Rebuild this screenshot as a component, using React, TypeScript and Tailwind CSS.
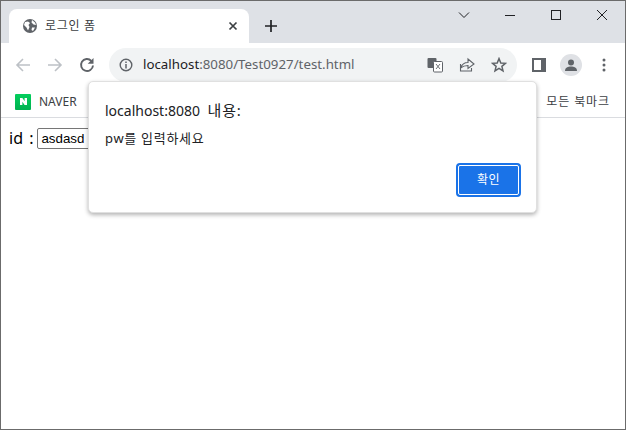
import React from "react";

function Tab() {
  return (
    <div className="relative ml-[8px] mt-[8px] flex h-[34px] w-[240px] items-center rounded-t-[8px] bg-white pl-[13px]">
      <svg width="16" height="16" viewBox="0 0 16 16" className="shrink-0">
        <circle cx="8" cy="8" r="7" fill="#5f6368" />
        <path d="M3 4 L6 3.5 L8 5 L6.5 7 L7.5 9 L6 12.5 L4.5 9.5 L2 7 Z M10 2 L13 4.5 L14 7 L11.5 6.5 L9.5 4.5 Z M10 9.5 L13 9.5 L11 13 L9.5 12 Z" fill="#fff" />
      </svg>
      <span className="ml-[7px] text-[12px] tracking-[0.7px] text-[#3c4043]">로그인 폼</span>
      <svg width="10" height="10" viewBox="0 0 10 10" className="absolute left-[219px] top-[12px]">
        <path d="M1.5 1.5 L8.5 8.5 M8.5 1.5 L1.5 8.5" stroke="#3c4043" strokeWidth="1.7" />
      </svg>
    </div>
  );
}

export default function App() {
  return (
    <div className="relative h-[430px] w-[626px] overflow-hidden border border-[#6b6b6b] bg-white font-['Noto_Sans','Noto_Sans_CJK_KR',sans-serif]">
      {/* title bar */}
      <div className="flex h-[42px] bg-[#dee1e6]">
        <Tab />
        <svg width="14" height="14" viewBox="0 0 14 14" className="ml-[15px] mt-[18px]">
          <path d="M7 1 V13 M1 7 H13" stroke="#202124" strokeWidth="1.7" />
        </svg>
        <div className="ml-auto flex">
          <svg width="12" height="8" viewBox="0 0 12 8" className="mr-[34px] mt-[10px]">
            <path d="M1 1.5 L6 6.5 L11 1.5" stroke="#202124" strokeWidth="1" fill="none" />
          </svg>
          <svg width="12" height="12" viewBox="0 0 12 12" className="mr-[34px] mt-[8px]">
            <path d="M1 6.5 H11" stroke="#202124" strokeWidth="1" />
          </svg>
          <svg width="12" height="12" viewBox="0 0 12 12" className="mr-[34px] mt-[8px]">
            <rect x="1.5" y="1.5" width="9" height="9" stroke="#202124" fill="none" />
          </svg>
          <svg width="12" height="12" viewBox="0 0 12 12" className="mr-[17px] mt-[8px]">
            <path d="M1 1 L11 11 M11 1 L1 11" stroke="#202124" strokeWidth="1" />
          </svg>
        </div>
      </div>

      {/* toolbar */}
      <div className="flex h-[43px] items-center bg-white">
        <svg width="16" height="16" viewBox="0 0 16 16" className="ml-[14px]">
          <path d="M15 8 H2 M8 2 L2 8 L8 14" stroke="#bdc1c6" strokeWidth="1.6" fill="none" />
        </svg>
        <svg width="16" height="16" viewBox="0 0 16 16" className="ml-[16px]">
          <path d="M1 8 H14 M8 2 L14 8 L8 14" stroke="#bdc1c6" strokeWidth="1.6" fill="none" />
        </svg>
        <svg width="16" height="16" viewBox="0 0 16 16" className="ml-[16px]">
          <path d="M14 8.5 A6 6 0 1 1 12.3 3.8" stroke="#5f6368" strokeWidth="1.9" fill="none" />
          <path d="M14.5 1 V6.8 H8.7 Z" fill="#5f6368" />
        </svg>
        <div className="ml-[14px] flex h-[34px] w-[408px] items-center rounded-full bg-[#f1f3f4]">
          <svg width="14" height="14" viewBox="0 0 14 14" className="ml-[10px]">
            <circle cx="7" cy="7" r="5.8" stroke="#5f6368" strokeWidth="1.4" fill="none" />
            <path d="M7 6 V10.5 M7 3.4 V5" stroke="#5f6368" strokeWidth="1.5" />
          </svg>
          <span className="ml-[10px] text-[13.3px] text-[#5f6368]">
            <span className="text-[#202124]">localhost</span>:8080/Test0927/test.html
          </span>
          <svg width="16" height="16" viewBox="0 0 16 16" className="ml-auto">
            <rect x="0.5" y="1" width="9" height="10" rx="1" fill="#5f6368" />
            <rect x="6.5" y="4.5" width="9" height="10.5" rx="1" fill="#fff" stroke="#5f6368" />
            <path d="M9 7 L13 12 M13 7 L9 12" stroke="#5f6368" strokeWidth="0.9" />
          </svg>
          <svg width="16" height="16" viewBox="0 0 16 16" className="ml-[16px]">
            <path d="M1.5 7 V14 H12.5 V11 M1.5 11 C3 7 6 5.5 9 5.5 V2 L15 7 L9 11.5 V8.5 C6 8.5 4 9 1.5 11" stroke="#5f6368" strokeWidth="1.1" fill="none" />
          </svg>
          <svg width="16" height="16" viewBox="0 0 16 16" className="ml-[16px] mr-[10px]">
            <path d="M8 1.6 L9.8 6 L14.5 6.3 L10.9 9.3 L12 13.9 L8 11.4 L4 13.9 L5.1 9.3 L1.5 6.3 L6.2 6 Z" stroke="#5f6368" strokeWidth="1.5" fill="none" />
          </svg>
        </div>
        <svg width="14" height="14" viewBox="0 0 14 14" className="ml-[15px]">
          <rect x="0" y="0" width="14" height="14" fill="#5f6368" />
          <rect x="2" y="2" width="7" height="10" fill="#fff" />
        </svg>
        <div className="ml-[14px] flex h-[22px] w-[22px] items-center justify-center rounded-full bg-[#dfe1e5]">
          <svg width="14" height="14" viewBox="0 0 14 14">
            <circle cx="7" cy="4.5" r="3" fill="#5f6368" />
            <path d="M1 13 C1 9.5 4 8.5 7 8.5 C10 8.5 13 9.5 13 13 Z" fill="#5f6368" />
          </svg>
        </div>
        <svg width="4" height="14" viewBox="0 0 4 14" className="ml-[20px]">
          <circle cx="2" cy="2" r="1.5" fill="#5f6368" />
          <circle cx="2" cy="7" r="1.5" fill="#5f6368" />
          <circle cx="2" cy="12" r="1.5" fill="#5f6368" />
        </svg>
      </div>

      {/* bookmarks */}
      <div className="flex h-[32px] items-center border-b border-[#dadce0] bg-white">
        <div className="ml-[14px] flex h-[16px] w-[16px] items-center justify-center rounded-[1px] bg-gradient-to-b from-[#03cf5d] to-[#00b150]">
          <svg width="9" height="9" viewBox="0 0 9 9">
            <path d="M1 1 H3.4 L5.6 4.3 V1 H8 V8 H5.6 L3.4 4.7 V8 H1 Z" fill="#fff" />
          </svg>
        </div>
        <span className="ml-[8px] text-[12px] text-[#3c4043]">NAVER</span>
        <span className="ml-auto mr-[15px] text-[12px] tracking-[0.9px] text-[#3c4043]">모든 북마크</span>
      </div>

      {/* page */}
      <div className="flex items-center pl-[8px] pt-[8px] text-[16px] text-black">
        <span className="[word-spacing:2px]">id :</span>
        <input
          readOnly
          value="asdasd"
          className="ml-[4px] h-[21px] w-[153px] rounded-[2px] border border-[#767676] px-[3px] font-['Liberation_Sans'] text-[13.33px] text-black"
        />
      </div>

      {/* alert */}
      <div className="absolute left-[87px] top-[80px] flex h-[132px] w-[449px] flex-col rounded-[5px] border border-[#e0e0e0] bg-white pb-[15px] pl-[16px] pr-[15px] pt-[18px] shadow-[0_2px_4px_rgba(0,0,0,0.3)]">
        <div className="text-[14px] leading-[20px] text-[#202124]">
          localhost:8080 <span className="ml-[4px] text-[15px] tracking-[0.8px]">내용:</span>
        </div>
        <div className="mt-[7px] text-[13px] leading-[20px] tracking-[0.7px] text-[#202124]">pw를 입력하세요</div>
        <div className="mt-auto flex justify-end">
          <div className="flex h-[34px] w-[65px] items-center justify-center rounded-[4px] border-[2px] border-[#1a73e8] bg-[#1a73e8] text-[12px] tracking-[0.5px] text-white outline outline-1 -outline-offset-3 outline-white">
            확인
          </div>
        </div>
      </div>
    </div>
  );
}
